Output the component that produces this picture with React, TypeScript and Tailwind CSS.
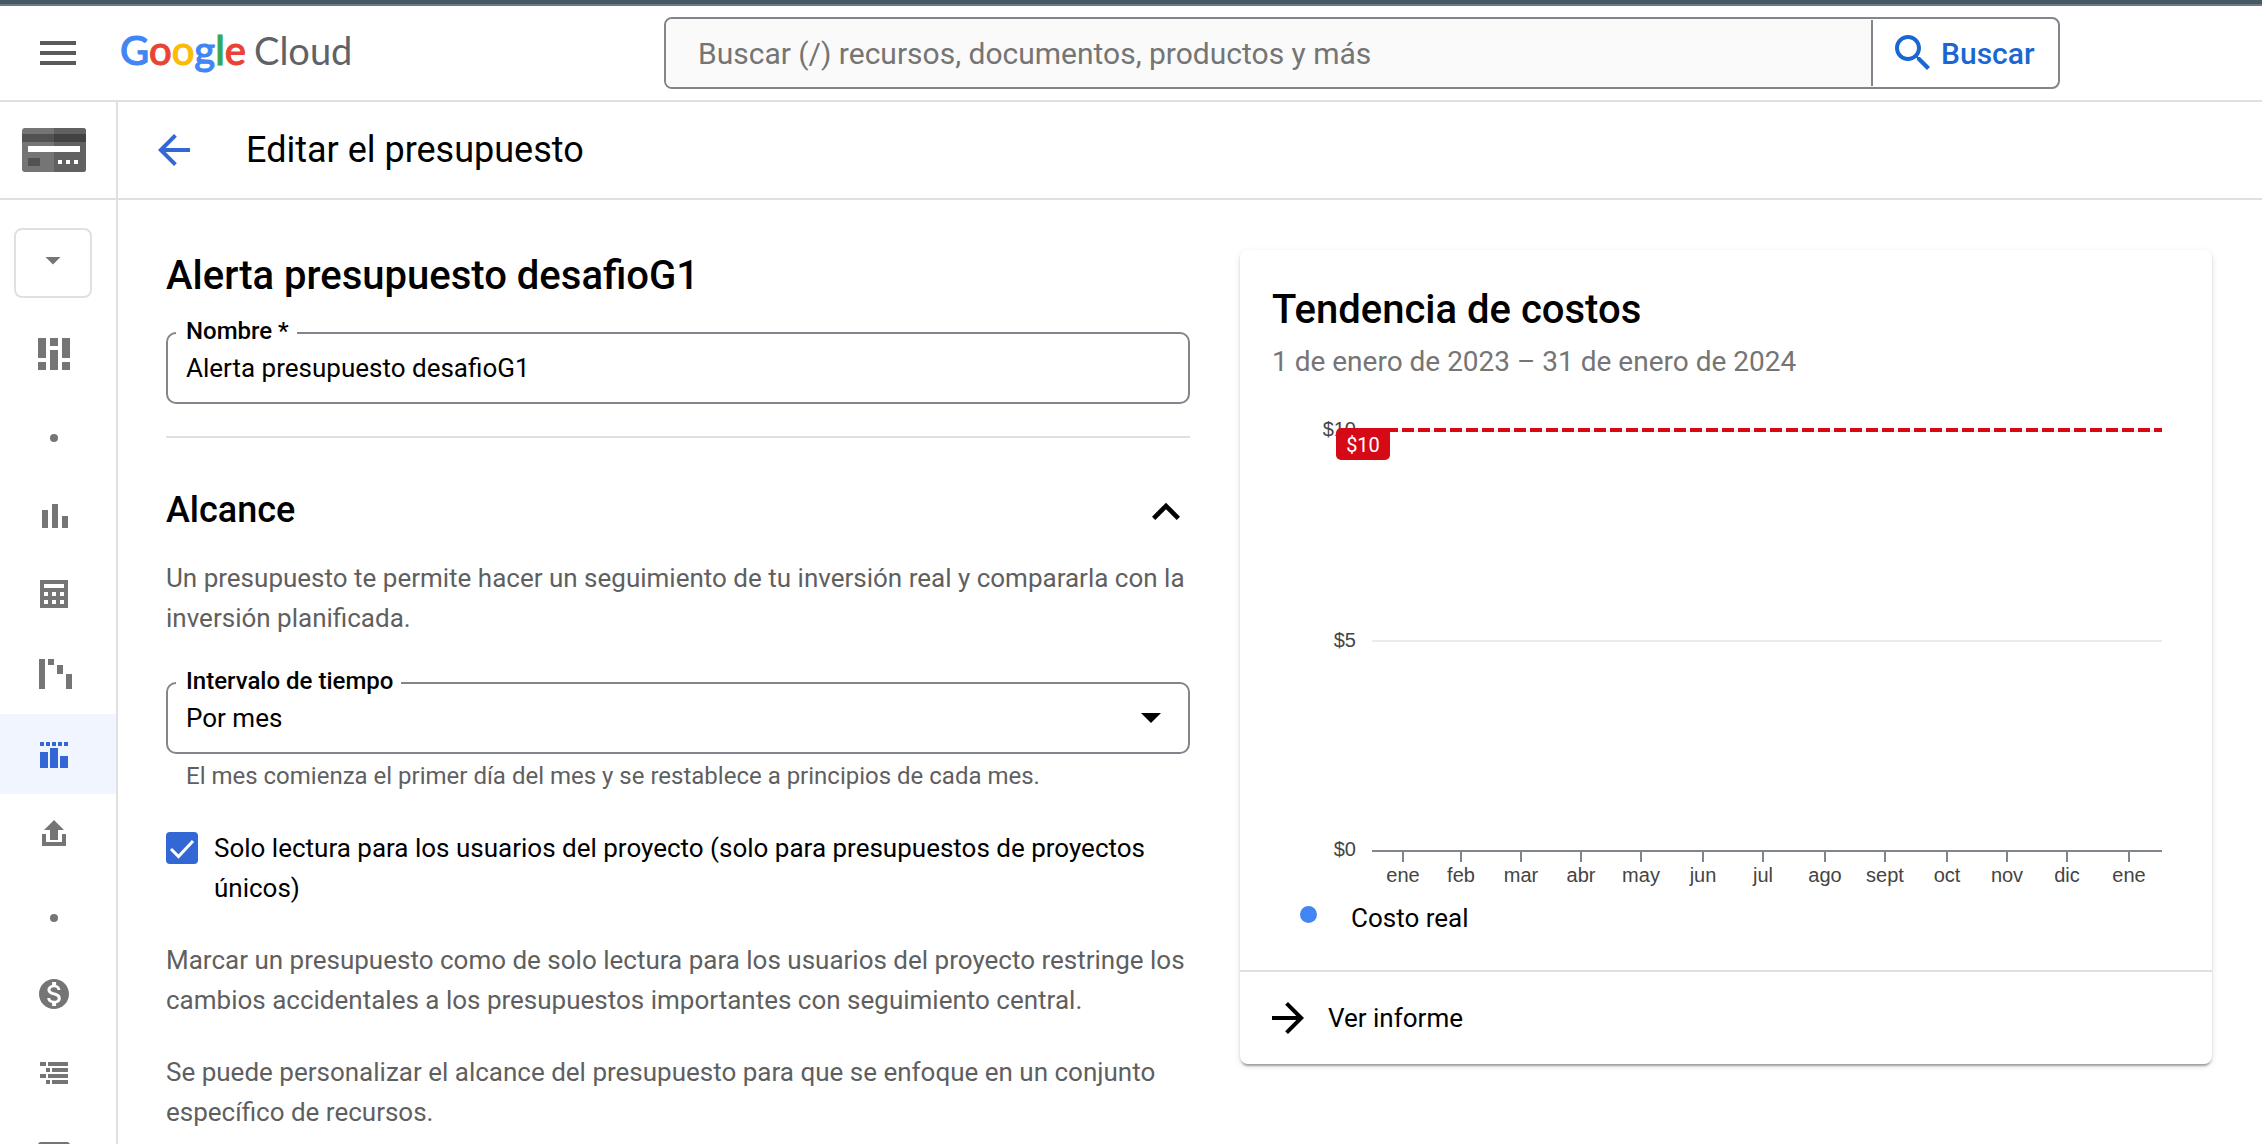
import type { ReactNode } from "react";

const months: [string, number][] = [
  ["ene", 163],
  ["feb", 221],
  ["mar", 281],
  ["abr", 341],
  ["may", 401],
  ["jun", 463],
  ["jul", 523],
  ["ago", 585],
  ["sept", 645],
  ["oct", 707],
  ["nov", 767],
  ["dic", 827],
  ["ene", 889],
];

const navItems: { label: string; active?: boolean; icon: ReactNode }[] = [
  {
    label: "Descripción general",
    icon: <path d="M4 4h8v20H4zM4 28h8v8H4zM16 4h8v8h-8zM16 16h8v20h-8zM28 4h8v20h-8zM28 28h8v8h-8z" />,
  },
  { label: "Administración de costos", icon: <circle cx="20" cy="24" r="4" /> },
  { label: "Informes", icon: <path d="M8 16h6v18H8zM18 10h6v24h-6zM28 22h6v12h-6z" /> },
  {
    label: "Tabla de costos",
    icon: (
      <path
        fillRule="evenodd"
        d="M6 6h28v28H6zM10 10v4h20v-4zM10 18v4h4v-4zM18 18v4h4v-4zM26 18v4h4v-4zM10 26v4h4v-4zM18 26v4h4v-4zM26 26v4h4v-4z"
      />
    ),
  },
  { label: "Desglose de costos", icon: <path d="M5 5h6v30H5zM14 5h6v6h-6zM23 11h6v9h-6zM32 20h6v15h-6z" /> },
  {
    label: "Presupuestos y alertas",
    active: true,
    icon: (
      <path d="M6 8h4v4H6zM12 8h4v4h-4zM18 8h4v4h-4zM24 8h4v4h-4zM30 8h4v4h-4zM6 18h8v16H6zM16 14h8v20h-8zM26 22h8v12h-8z" />
    ),
  },
  { label: "Exportación de facturación", icon: <path d="M20 6l10 10h-6v10h-8V16h-6zM8 20h4v8h16v-8h4v12H8z" /> },
  { label: "Optimización de costos", icon: <circle cx="20" cy="24" r="4" /> },
  {
    label: "Descuentos por compromiso",
    icon: (
      <path
        transform="translate(2 2) scale(1.5)"
        d="M12 2C6.48 2 2 6.48 2 12s4.48 10 10 10 10-4.48 10-10S17.52 2 12 2zm1.41 16.09V20h-2.67v-1.93c-1.71-.36-3.16-1.46-3.27-3.4h1.96c.1 1.05.82 1.87 2.65 1.87 1.96 0 2.4-.98 2.4-1.59 0-.83-.44-1.61-2.67-2.14-2.48-.6-4.18-1.62-4.18-3.67 0-1.72 1.39-2.84 3.11-3.21V4h2.67v1.95c1.86.45 2.79 1.86 2.85 3.39H14.3c-.05-1.11-.64-1.87-2.22-1.87-1.5 0-2.4.68-2.4 1.64 0 .84.65 1.39 2.67 1.91s4.18 1.39 4.18 3.91c-.01 1.83-1.38 2.83-3.12 3.16z"
      />
    ),
  },
  {
    label: "Centro de FinOps",
    icon: <path d="M6 8h6v4H6zM14 8h20v4H14zM12 14h4v4h-4zM18 14h16v4H18zM6 20h6v4H6zM14 20h20v4H14zM12 26h4v4h-4zM18 26h16v4H18z" />,
  },
  { label: "Precios", icon: <rect x="4" y="8" width="32" height="24" rx="3" /> },
];

function Header() {
  return (
    <header className="flex h-[102px] shrink-0 items-center border-t-4 border-b-2 border-t-[#455a64] border-b-[#e0e0e0]">
      <div className="flex h-full w-full items-center border-t-2 border-[#6c7a84]">
        <div className="flex w-[664px] shrink-0 items-center pl-[34px]">
          <button type="button" aria-label="Menú de navegación" className="mr-[38px]">
            <svg viewBox="0 0 24 24" className="size-12 fill-[#5a5a5a]">
              <path d="M3 18h18v-2H3v2zm0-5h18v-2H3v2zm0-7v2h18V6H3z" />
            </svg>
          </button>
          <a href="#inicio" className="flex items-baseline gap-2 pb-1.5 font-['Lato',sans-serif] leading-12">
            <span className="text-[40px] font-medium [-webkit-text-stroke:1px]">
              <span className="text-[#4285f4]">G</span>
              <span className="text-[#ea4335]">o</span>
              <span className="text-[#fbbc04]">o</span>
              <span className="text-[#4285f4]">g</span>
              <span className="text-[#34a853]">l</span>
              <span className="text-[#ea4335]">e</span>
            </span>
            <span className="text-[38px] text-[#5f6368]">Cloud</span>
          </a>
        </div>
        <form className="flex h-[72px] flex-1 rounded-lg border-2 border-[#80868b]">
          <input
            type="search"
            aria-label="Buscar recursos"
            placeholder="Buscar (/) recursos, documentos, productos y más"
            className="min-w-0 flex-1 rounded-l-md bg-[#fafafa] px-8 text-[30px] outline-none placeholder:text-[#757575]"
          />
          <button
            type="button"
            className="my-px flex w-[187px] items-center gap-1 border-l-2 border-[#80868b] pl-4 text-[30px] font-medium text-[#1967d2]"
          >
            <svg viewBox="0 0 24 24" className="size-12 shrink-0 fill-[#1967d2]">
              <path d="M15.5 14h-.79l-.28-.27C15.41 12.59 16 11.11 16 9.5 16 5.91 13.09 3 9.5 3S3 5.91 3 9.5 5.91 16 9.5 16c1.61 0 3.09-.59 4.23-1.57l.27.28v.79l5 4.99L20.49 19l-4.99-5zm-6 0C7.01 14 5 11.99 5 9.5S7.01 5 9.5 5 14 7.01 14 9.5 11.99 14 9.5 14z" />
            </svg>
            Buscar
          </button>
        </form>
        <div className="w-[202px] shrink-0" />
      </div>
    </header>
  );
}

function Sidebar() {
  return (
    <aside className="flex w-[118px] shrink-0 flex-col border-r-2 border-[#e0e0e0]">
      <div className="flex h-[98px] shrink-0 items-center border-b-2 border-[#e0e0e0] pl-[22px]">
        <svg viewBox="0 0 64 44" className="h-11 w-16" role="img" aria-label="Facturación">
          <rect width="64" height="44" rx="3" fill="#757575" />
          <path d="M32 0h29a3 3 0 0 1 3 3v38a3 3 0 0 1-3 3H32z" fill="#616161" />
          <path d="M0 6h32v8H0z" fill="#525252" />
          <path d="M32 6h32v8H32z" fill="#424242" />
          <path d="M6 18h52v6H6z" fill="#fff" />
          <path d="M6 30h12v8H6z" fill="#525252" />
          <path d="M36 32h4v4h-4zM44 32h4v4h-4zM52 32h4v4h-4z" fill="#fff" />
        </svg>
      </div>
      <button
        type="button"
        aria-label="Seleccionar cuenta de facturación"
        className="mt-7 mb-4 ml-[14px] flex h-[70px] w-[78px] shrink-0 justify-center rounded-lg border-2 border-[#e0e0e0] pt-3"
      >
        <svg viewBox="0 0 24 24" className="size-9 fill-[#757575]">
          <path d="M7 10l5 5 5-5z" />
        </svg>
      </button>
      <nav>
        {navItems.map((item) => (
          <a
            key={item.label}
            href="#seccion"
            aria-label={item.label}
            className={
              item.active
                ? "flex h-20 items-center justify-center bg-[#f0f5ff] pr-2"
                : "flex h-20 items-center justify-center pr-2"
            }
          >
            <svg viewBox="0 0 40 40" className={item.active ? "size-10 fill-[#3367d6]" : "size-10 fill-[#757575]"}>
              {item.icon}
            </svg>
          </a>
        ))}
      </nav>
    </aside>
  );
}

function FieldLabel({ htmlFor, children }: { htmlFor: string; children: ReactNode }) {
  return (
    <label
      htmlFor={htmlFor}
      className="absolute -top-[15px] left-[10px] bg-white pr-2 pl-[10px] text-[24px] leading-7 font-medium"
    >
      {children}
    </label>
  );
}

function BudgetForm() {
  return (
    <form className="min-w-0 text-[26px] leading-10">
      <h2 className="text-[40px] leading-[52px] font-medium">Alerta presupuesto desafioG1</h2>
      <div className="relative mt-[30px]">
        <input
          id="nombre"
          type="text"
          defaultValue="Alerta presupuesto desafioG1"
          className="block h-[72px] w-full rounded-[10px] border-2 border-[#80868b] px-[18px] outline-none"
        />
        <FieldLabel htmlFor="nombre">Nombre *</FieldLabel>
      </div>
      <hr className="mt-8 border-t-2 border-[#e0e0e0]" />
      <div className="mt-[46px] flex items-start justify-between">
        <h3 className="text-[36px] leading-[52px] font-medium">Alcance</h3>
        <button type="button" aria-label="Contraer Alcance" className="-mr-1">
          <svg viewBox="0 0 24 24" className="size-14">
            <path d="M12 8l-6 6 1.41 1.41L12 10.83l4.59 4.58L18 14z" />
          </svg>
        </button>
      </div>
      <p className="mt-[18px] text-[#5f5f5f]">
        Un presupuesto te permite hacer un seguimiento de tu inversión real y compararla con la inversión planificada.
      </p>
      <div className="relative mt-11">
        <select
          id="intervalo"
          aria-describedby="intervalo-ayuda"
          className="block h-[72px] w-full appearance-none rounded-[10px] border-2 border-[#80868b] bg-white px-[18px] outline-none"
        >
          <option>Por mes</option>
          <option>Trimestral</option>
          <option>Anual</option>
        </select>
        <svg viewBox="0 0 24 24" className="pointer-events-none absolute top-[11px] right-[15px] size-12">
          <path d="M7 10l5 5 5-5z" />
        </svg>
        <FieldLabel htmlFor="intervalo">Intervalo de tiempo</FieldLabel>
      </div>
      <p id="intervalo-ayuda" className="mt-1 px-5 text-[24px] leading-9 text-[#5f5f5f]">
        El mes comienza el primer día del mes y se restablece a principios de cada mes.
      </p>
      <div className="mt-[34px] flex gap-4">
        <span className="relative mt-1 size-8 shrink-0">
          <input
            id="solo-lectura"
            type="checkbox"
            defaultChecked
            className="peer block size-8 appearance-none rounded border-2 border-[#5f5f5f] checked:border-[#3367d6] checked:bg-[#3367d6]"
          />
          <svg viewBox="0 0 32 32" className="pointer-events-none absolute inset-0 hidden size-8 peer-checked:block">
            <path d="M5 17l7.500 7.500L27 9" fill="none" stroke="#fff" strokeWidth="3" />
          </svg>
        </span>
        <label htmlFor="solo-lectura">
          Solo lectura para los usuarios del proyecto (solo para presupuestos de proyectos únicos)
        </label>
      </div>
      <p className="mt-8 text-[#5f5f5f]">
        Marcar un presupuesto como de solo lectura para los usuarios del proyecto restringe los cambios accidentales a
        los presupuestos importantes con seguimiento central.
      </p>
      <p className="mt-8 text-[#5f5f5f]">
        Se puede personalizar el alcance del presupuesto para que se enfoque en un conjunto específico de recursos.
      </p>
    </form>
  );
}

function CostChart() {
  return (
    <svg viewBox="0 0 972 504" className="block h-auto w-full" role="img" aria-label="Tendencia de costos por mes">
      <g fill="#444" fontFamily="'Liberation Sans', Arial, sans-serif" fontSize="20">
        <text x="116" y="46" textAnchor="end">$10</text>
        <text x="116" y="257" textAnchor="end">$5</text>
        <text x="116" y="466" textAnchor="end">$0</text>
        {months.map(([name, x]) => (
          <text key={x} x={x} y="492" textAnchor="middle">
            {name}
          </text>
        ))}
      </g>
      <path d="M132 41H922M132 251H922" stroke="#ebebeb" strokeWidth="2" />
      <path d="M132 461H922" stroke="#80868b" strokeWidth="2" />
      {months.map(([, x]) => (
        <path key={x} d={`M${x} 462v10`} stroke="#80868b" strokeWidth="2" />
      ))}
      <path d="M130 40H922" stroke="#d50a16" strokeWidth="4" strokeDasharray="12 4" />
      <rect x="96" y="38" width="54" height="32" rx="5" fill="#d50a16" />
      <text x="123" y="62" textAnchor="middle" fill="#fff" fontFamily="Roboto, sans-serif" fontSize="20">
        $10
      </text>
    </svg>
  );
}

function TrendCard() {
  return (
    <section className="min-w-0 self-start rounded-lg bg-white shadow-[0_4px_2px_-2px_rgba(0,0,0,0.2),0_2px_2px_rgba(0,0,0,0.14),0_2px_6px_rgba(0,0,0,0.12)]">
      <div className="px-8 pt-9">
        <h2 className="text-[40px] leading-[48px] font-medium">Tendencia de costos</h2>
        <p className="my-3 text-[28px] leading-8 text-[#757575]">1 de enero de 2023 – 31 de enero de 2024</p>
      </div>
      <CostChart />
      <div className="flex h-[76px] items-start pl-[60px] text-[26px] leading-12">
        <span className="mt-3 mr-[34px] size-[17px] rounded-full bg-[#4285f4]" />
        Costo real
      </div>
      <a href="#informe" className="flex h-[94px] items-center gap-4 border-t-2 border-[#e0e0e0] pl-6 text-[26px]">
        <svg viewBox="0 0 24 24" className="size-12">
          <path d="M12 4l-1.410 1.410L16.170 11H4v2h12.170l-5.580 5.590L12 20l8-8z" />
        </svg>
        Ver informe
      </a>
    </section>
  );
}

export default function App() {
  return (
    <div className="flex h-screen flex-col overflow-hidden bg-white font-['Roboto',sans-serif] text-black">
      <Header />
      <div className="flex min-h-0 flex-1">
        <Sidebar />
        <div className="flex min-w-0 flex-1 flex-col">
          <div className="flex h-[98px] shrink-0 items-center gap-12 border-b-2 border-[#e0e0e0] pl-8">
            <button type="button" aria-label="Volver">
              <svg viewBox="0 0 24 24" className="size-12 fill-[#3367d6]">
                <path d="M20 11H7.830l5.590-5.590L12 4l-8 8 8 8 1.410-1.410L7.830 13H20z" />
              </svg>
            </button>
            <h1 className="text-[36px]">Editar el presupuesto</h1>
          </div>
          <main className="grid grid-cols-[1024fr_972fr] gap-[50px] pt-[50px] pr-[50px] pl-12">
            <BudgetForm />
            <TrendCard />
          </main>
        </div>
      </div>
    </div>
  );
}
